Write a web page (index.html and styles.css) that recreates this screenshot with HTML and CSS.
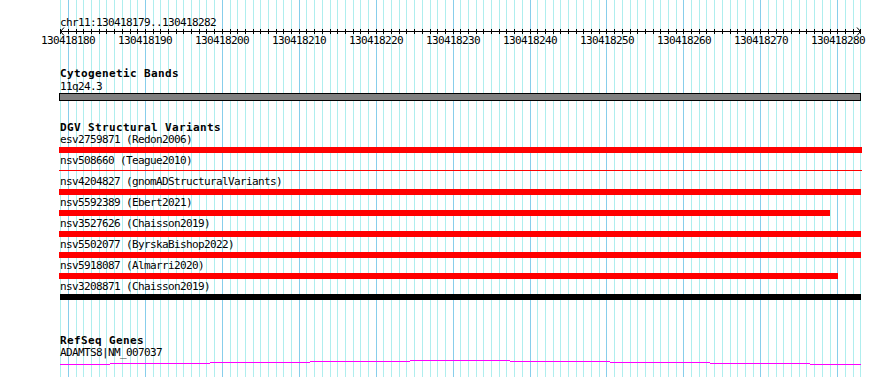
FILE: index.html
```html
<!DOCTYPE html>
<html>
<head>
<meta charset="utf-8">
<title>Genome browser</title>
<link rel="stylesheet" href="styles.css">
</head>
<body>
<div class="view">
  <svg class="grid" width="890" height="377" shape-rendering="crispEdges">
    <defs>
      <g id="g13">
        <rect x="0" width="1" height="377"/><rect x="8" width="1" height="377"/><rect x="16" width="1" height="377"/><rect x="23" width="1" height="377"/><rect x="31" width="1" height="377"/><rect x="39" width="1" height="377"/><rect x="46" width="1" height="377"/><rect x="54" width="1" height="377"/><rect x="62" width="1" height="377"/><rect x="70" width="1" height="377"/><rect x="77" width="1" height="377"/><rect x="85" width="1" height="377"/><rect x="93" width="1" height="377"/>
      </g>
    </defs>
    <g class="minor">
      <use href="#g13" x="60"/><use href="#g13" x="160"/><use href="#g13" x="260"/><use href="#g13" x="360"/><use href="#g13" x="460"/><use href="#g13" x="560"/><use href="#g13" x="660"/><use href="#g13" x="760"/>
      <rect x="860" width="1" height="377"/>
    </g>
    <g class="major">
      <rect x="68" width="1" height="377"/><rect x="145" width="1" height="377"/><rect x="222" width="1" height="377"/><rect x="299" width="1" height="377"/><rect x="376" width="1" height="377"/><rect x="453" width="1" height="377"/><rect x="530" width="1" height="377"/><rect x="606" width="1" height="377"/><rect x="683" width="1" height="377"/><rect x="760" width="1" height="377"/><rect x="837" width="1" height="377"/>
    </g>
  </svg>

  <div class="tracks">
    <svg class="ruler" width="890" height="48">
      <defs>
        <g id="t13">
          <rect x="0" y="29" width="1" height="5"/><rect x="8" y="29" width="1" height="5"/><rect x="16" y="29" width="1" height="5"/><rect x="23" y="29" width="1" height="5"/><rect x="31" y="29" width="1" height="5"/><rect x="39" y="29" width="1" height="5"/><rect x="46" y="29" width="1" height="5"/><rect x="54" y="29" width="1" height="5"/><rect x="62" y="29" width="1" height="5"/><rect x="70" y="29" width="1" height="5"/><rect x="77" y="29" width="1" height="5"/><rect x="85" y="29" width="1" height="5"/><rect x="93" y="29" width="1" height="5"/>
        </g>
      </defs>
      <text class="rtitle" x="60" y="26">chr11:130418179..130418282</text>
      <g shape-rendering="crispEdges">
        <rect x="60" y="31" width="801" height="1"/>
        <use href="#t13" x="60"/><use href="#t13" x="160"/><use href="#t13" x="260"/><use href="#t13" x="360"/><use href="#t13" x="460"/><use href="#t13" x="560"/><use href="#t13" x="660"/><use href="#t13" x="760"/>
        <rect x="860" y="29" width="1" height="5"/>
      </g>
      <path class="arrow" d="M64 27.5 L60.5 31.5 L64 35.5"/>
      <path class="arrow" d="M857 27.5 L860.5 31.5 L857 35.5"/>
      <g class="rnum">
        <text x="68" y="44">130418180</text>
        <text x="145" y="44">130418190</text>
        <text x="222" y="44">130418200</text>
        <text x="299" y="44">130418210</text>
        <text x="376" y="44">130418220</text>
        <text x="453" y="44">130418230</text>
        <text x="530" y="44">130418240</text>
        <text x="607" y="44">130418250</text>
        <text x="684" y="44">130418260</text>
        <text x="761" y="44">130418270</text>
        <text x="838" y="44">130418280</text>
      </g>
    </svg>

    <section class="track cyto">
      <div class="title">Cytogenetic Bands</div>
      <div class="label">11q24.3</div>
      <div class="band"></div>
    </section>

    <section class="track dgv">
      <div class="title">DGV Structural Variants</div>
      <div class="feat"><div class="label">esv2759871 (Redon2006)</div><div class="bar" style="width:803px"></div></div>
      <div class="feat"><div class="label">nsv508660 (Teague2010)</div><div class="bar thin" style="width:803px"></div></div>
      <div class="feat"><div class="label">nsv4204827 (gnomADStructuralVariants)</div><div class="bar" style="width:802px"></div></div>
      <div class="feat"><div class="label">nsv5592389 (Ebert2021)</div><div class="bar" style="width:771px"></div></div>
      <div class="feat"><div class="label">nsv3527626 (Chaisson2019)</div><div class="bar" style="width:802px"></div></div>
      <div class="feat"><div class="label">nsv5502077 (ByrskaBishop2022)</div><div class="bar" style="width:802px"></div></div>
      <div class="feat"><div class="label">nsv5918087 (Almarri2020)</div><div class="bar" style="width:779px"></div></div>
      <div class="feat"><div class="label">nsv3208871 (Chaisson2019)</div><div class="bar black" style="width:801px"></div></div>
    </section>

    <section class="track refseq">
      <div class="title">RefSeq Genes</div>
      <div class="label">ADAMTS8|NM_007037</div>
      <svg class="gene" width="890" height="8" shape-rendering="crispEdges">
        <rect x="60" y="5" width="50" height="1"/>
        <rect x="110" y="4" width="100" height="1"/>
        <rect x="210" y="3" width="100" height="1"/>
        <rect x="310" y="2" width="100" height="1"/>
        <rect x="410" y="1" width="100" height="1"/>
        <rect x="510" y="2" width="100" height="1"/>
        <rect x="610" y="3" width="100" height="1"/>
        <rect x="710" y="4" width="100" height="1"/>
        <rect x="810" y="5" width="51" height="1"/>
      </svg>
    </section>
  </div>
</div>
</body>
</html>
```

FILE: styles.css
```css
html, body {
  margin: 0;
  padding: 0;
  background: #ffffff;
}

.view {
  position: relative;
  width: 890px;
  height: 377px;
  overflow: hidden;
  font-family: "DejaVu Sans Mono", "Liberation Mono", monospace;
  font-size: 11px;
  letter-spacing: -0.62px;
  color: #000000;
}

.grid {
  position: absolute;
  left: 0;
  top: 0;
}

.grid .minor {
  fill: #afeeee;
}

.grid .major {
  fill: #87ceeb;
}

.tracks {
  position: relative;
}

.ruler {
  display: block;
  fill: #000000;
}

.ruler text {
  font-family: "DejaVu Sans Mono", "Liberation Mono", monospace;
  font-size: 11px;
  letter-spacing: -0.62px;
}

.rnum text {
  text-anchor: middle;
}

.arrow {
  fill: none;
  stroke: #000000;
  stroke-width: 1;
}

.title {
  font-weight: bold;
  letter-spacing: 0.38px;
  line-height: 12px;
  padding-left: 60px;
  white-space: nowrap;
}

.label {
  line-height: 12px;
  padding-left: 60px;
  white-space: nowrap;
}

.cyto {
  margin-top: 20px;
}

.cyto .label {
  margin-top: 1px;
}

.band {
  margin-left: 59px;
  width: 800px;
  height: 6px;
  border: 1px solid #000000;
  background: #808080;
}

.dgv {
  margin-top: 21px;
}

.bar {
  margin: 1px 0 2px 59px;
  height: 6px;
  background: #ff0000;
}

.bar.thin {
  height: 1px;
  margin-top: 3px;
  margin-bottom: 5px;
}

.bar.black {
  margin-left: 60px;
  background: #000000;
}

.refseq {
  margin-top: 35px;
}

.gene {
  display: block;
  fill: #ff00ff;
}
```
